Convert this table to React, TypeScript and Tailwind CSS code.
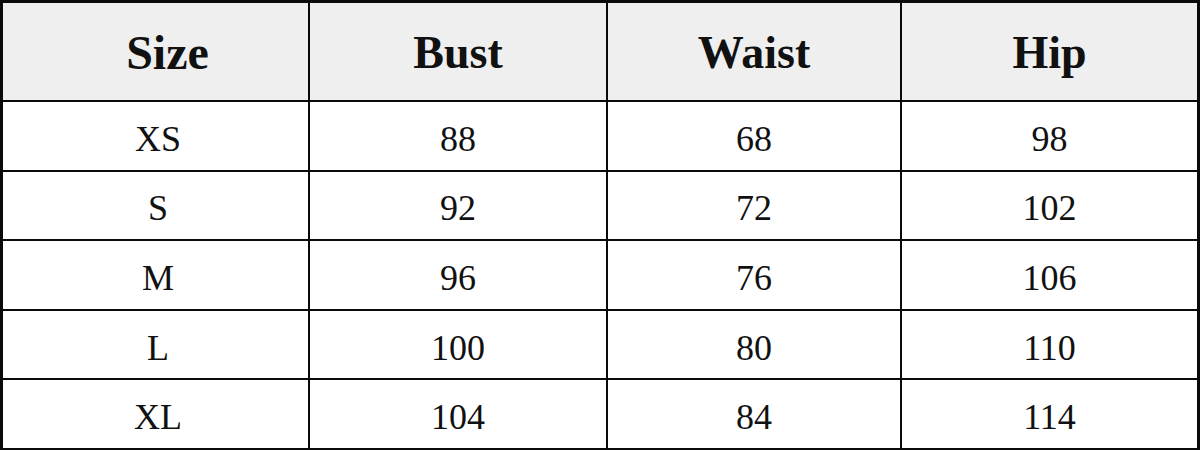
const headers = ["Size", "Bust", "Waist", "Hip"];

const rows = [
  ["XS", "88", "68", "98"],
  ["S", "92", "72", "102"],
  ["M", "96", "76", "106"],
  ["L", "100", "80", "110"],
  ["XL", "104", "84", "114"],
];

export default function App() {
  return (
    <div className="w-[1200px] h-[450px] bg-white">
      <div
        className="grid h-full w-full bg-[#0a0a0a] pt-[3px] px-[3px] pb-[2px] gap-[2px] grid-cols-[305px_296px_292px_295px] grid-rows-[97px_repeat(5,1fr)] text-[#111]"
        style={{ fontFamily: '"Liberation Serif", "Times New Roman", serif' }}
      >
        {headers.map((h, i) => (
          <div
            key={h}
            className={`flex items-center justify-center bg-[#efefef] leading-none pt-[2px] font-bold ${i === 0 ? "pl-[24px] text-[48px]" : "text-[46px]"}`}
          >
            {h}
          </div>
        ))}
        {rows.map((row) =>
          row.map((cell, i) => (
            <div
              key={row[0] + i}
              className={`flex items-center justify-center bg-white text-[36px] leading-none pt-[6px] ${i === 0 ? "pl-[5px]" : ""}`}
            >
              {cell}
            </div>
          ))
        )}
      </div>
    </div>
  );
}
